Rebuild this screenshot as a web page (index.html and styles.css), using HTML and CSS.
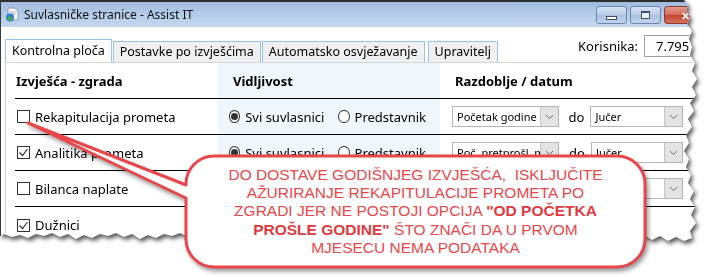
FILE: index.html
```html
<!DOCTYPE html>
<html lang="hr">
<head>
    <meta charset="UTF-8">
    <title>Suvlasničke stranice - Assist IT</title>
    <link rel="stylesheet" href="styles.css">
</head>
<body>
    <!-- Window screenshot with torn right/bottom edge -->
    <div class="frame">
        <div class="window">
            <div class="title-bar">
                <svg class="app-icon" width="15" height="15" viewBox="0 0 15 15">
                    <path d="M3 1h7l3 3v9H3z" fill="#f4f6f9" stroke="#8e9aab"/>
                    <path d="M4.5 5h6M4.5 7h6" stroke="#9fb3cc"/>
                    <circle cx="5" cy="10.5" r="4" fill="#2f7fd0"/>
                    <path d="M2.5 9.5c1-1 2-0.5 2.5 0.5s2 1 2.5 0v2c-1 1.5-3 2-4.5 1z" fill="#4cae3c"/>
                </svg>
                <span class="title">Suvlasničke stranice - Assist IT</span>
                <div class="win-buttons">
                    <span class="win-btn"><i class="glyph-min"></i></span>
                    <span class="win-btn"><i class="glyph-max"></i></span>
                    <span class="win-btn close">✕</span>
                </div>
            </div>

            <div class="client">
                <div class="tab-strip">
                    <ul class="tabs">
                        <li class="tab active">Kontrolna ploča</li>
                        <li class="tab">Postavke po izvješćima</li>
                        <li class="tab">Automatsko osvježavanje</li>
                        <li class="tab last">Upravitelj</li>
                    </ul>
                    <div class="users">
                        <span class="users-label">Korisnika:</span>
                        <span class="textbox">7.795</span>
                    </div>
                </div>

                <div class="tab-panel">
                    <div class="grid">
                        <div class="row head">
                            <div class="cell c1">Izvješća - zgrada</div>
                            <div class="cell c2">Vidljivost</div>
                            <div class="cell c3">Razdoblje / datum</div>
                        </div>

                        <div class="row">
                            <div class="cell c1"><span class="check"></span>Rekapitulacija prometa</div>
                            <div class="cell c2">
                                <span class="radio on"></span><span class="opt">Svi suvlasnici</span>
                                <span class="radio"></span><span class="opt">Predstavnik</span>
                            </div>
                            <div class="cell c3">
                                <div class="combo from"><span class="value">Početak godine</span><span class="arrow"><svg width="9" height="6" viewBox="0 0 9 6"><path d="M1 1l3.5 3.5L8 1" fill="none" stroke="#6d6d6d"/></svg></span></div>
                                <span class="to">do</span>
                                <div class="combo until"><span class="value">Jučer</span><span class="arrow"><svg width="9" height="6" viewBox="0 0 9 6"><path d="M1 1l3.5 3.5L8 1" fill="none" stroke="#6d6d6d"/></svg></span></div>
                            </div>
                        </div>

                        <div class="row">
                            <div class="cell c1"><span class="check on"><svg width="11" height="11" viewBox="0 0 11 11"><path d="M1.5 5.5l3 3 5-6.5" fill="none" stroke="#333" stroke-width="1.2"/></svg></span>Analitika prometa</div>
                            <div class="cell c2">
                                <span class="radio on"></span><span class="opt">Svi suvlasnici</span>
                                <span class="radio"></span><span class="opt">Predstavnik</span>
                            </div>
                            <div class="cell c3">
                                <div class="combo from"><span class="value">Poč. pretprošl. mj</span><span class="arrow"><svg width="9" height="6" viewBox="0 0 9 6"><path d="M1 1l3.5 3.5L8 1" fill="none" stroke="#6d6d6d"/></svg></span></div>
                                <span class="to">do</span>
                                <div class="combo until"><span class="value">Jučer</span><span class="arrow"><svg width="9" height="6" viewBox="0 0 9 6"><path d="M1 1l3.5 3.5L8 1" fill="none" stroke="#6d6d6d"/></svg></span></div>
                            </div>
                        </div>

                        <div class="row">
                            <div class="cell c1"><span class="check"></span>Bilanca naplate</div>
                            <div class="cell c2">
                                <span class="radio on"></span><span class="opt">Svi suvlasnici</span>
                                <span class="radio"></span><span class="opt">Predstavnik</span>
                            </div>
                            <div class="cell c3">
                                <div class="combo from"><span class="value">Početak godine</span><span class="arrow"><svg width="9" height="6" viewBox="0 0 9 6"><path d="M1 1l3.5 3.5L8 1" fill="none" stroke="#6d6d6d"/></svg></span></div>
                                <span class="to">do</span>
                                <div class="combo until"><span class="value">Jučer</span><span class="arrow"><svg width="9" height="6" viewBox="0 0 9 6"><path d="M1 1l3.5 3.5L8 1" fill="none" stroke="#6d6d6d"/></svg></span></div>
                            </div>
                        </div>

                        <div class="row last">
                            <div class="cell c1"><span class="check on"><svg width="11" height="11" viewBox="0 0 11 11"><path d="M1.5 5.5l3 3 5-6.5" fill="none" stroke="#333" stroke-width="1.2"/></svg></span>Dužnici</div>
                            <div class="cell c2"></div>
                            <div class="cell c3"></div>
                        </div>
                    </div>
                </div>
            </div>
        </div>
    </div>

    <!-- Red speech bubble laid over the window -->
    <svg class="callout" width="721" height="277" viewBox="0 0 721 277">
        <path d="M214 156H617A28 28 0 0 1 645 184V239A28 28 0 0 1 617 267H214A28 28 0 0 1 186 239V198L28 123L186 185V184A28 28 0 0 1 214 156Z"
              fill="#ffffff" stroke="#e8474a" stroke-width="3" stroke-linejoin="round"/>
    </svg>
    <div class="callout-body">
        <p class="callout-text">
            DO DOSTAVE GODIŠNJEG IZVJEŠĆA,&nbsp; ISKLJUČITE<br>
            AŽURIRANJE REKAPITULACIJE PROMETA PO<br>
            ZGRADI JER NE POSTOJI OPCIJA <b>"OD POČETKA</b><br>
            <b>PROŠLE GODINE"</b> ŠTO ZNAČI DA U PRVOM<br>
            MJESECU NEMA PODATAKA
        </p>
    </div>
</body>
</html>
```

FILE: styles.css
```css
body {
    margin: 0;
    width: 721px;
    height: 277px;
    position: relative;
    overflow: hidden;
    background-color: #ffffff;
    font-family: "Noto Sans", "Segoe UI", Arial, sans-serif;
    font-size: 13px;
    color: #000000;
}

/* Shadow follows the torn outline of the window */
.frame {
    filter: drop-shadow(2px 3px 2px rgba(0, 0, 0, 0.65));
}

.window {
    width: 700px;
    height: 250px;
    box-sizing: border-box;
    background-color: #ffffff;
    border-top: 2px solid #2e2e2e;
    border-left: 1px solid #3a3a3a;
    clip-path: polygon(0 0, 684px 0, 688px 5px, 686px 11px, 690px 17px, 687px 24px, 692px 31px, 689px 39px, 692px 47px, 690px 55px, 695px 63px, 692px 71px, 697px 79px, 692px 87px, 696px 95px, 690px 103px, 694px 111px, 688px 119px, 692px 127px, 686px 135px, 689px 143px, 684px 151px, 689px 159px, 686px 167px, 691px 175px, 688px 183px, 694px 191px, 690px 199px, 695px 207px, 691px 215px, 696px 223px, 690px 231px, 692px 238px, 684px 241px, 676px 237px, 668px 241px, 660px 236px, 652px 240px, 644px 235px, 636px 239px, 628px 236px, 620px 240px, 612px 235px, 604px 238px, 596px 234px, 588px 239px, 580px 236px, 572px 240px, 564px 235px, 556px 238px, 548px 234px, 540px 238px, 532px 235px, 524px 239px, 516px 234px, 508px 237px, 500px 233px, 492px 237px, 484px 234px, 476px 238px, 468px 235px, 460px 239px, 452px 234px, 444px 237px, 436px 233px, 428px 237px, 420px 234px, 412px 238px, 404px 235px, 396px 239px, 388px 234px, 380px 237px, 372px 233px, 364px 236px, 356px 234px, 348px 238px, 340px 235px, 332px 239px, 324px 234px, 316px 237px, 308px 233px, 300px 236px, 292px 234px, 284px 238px, 276px 235px, 268px 239px, 260px 234px, 252px 237px, 244px 233px, 236px 236px, 228px 234px, 220px 238px, 212px 235px, 204px 239px, 196px 234px, 188px 237px, 180px 233px, 172px 236px, 164px 234px, 156px 238px, 148px 235px, 140px 239px, 132px 234px, 124px 237px, 116px 233px, 108px 236px, 100px 234px, 92px 238px, 84px 235px, 76px 239px, 68px 234px, 60px 237px, 52px 233px, 44px 236px, 36px 234px, 28px 238px, 20px 235px, 12px 237px, 4px 234px, 0 236px);
}

/* Title bar */
.title-bar {
    height: 25px;
    display: flex;
    align-items: center;
    padding-left: 4px;
    background: linear-gradient(#9fbbdf, #b6cde9 55%, #c3d7ee);
}

.app-icon {
    margin-right: 4px;
}

.title {
    font-size: 12px;
    color: #111111;
}

.win-buttons {
    margin-left: auto;
    display: flex;
    gap: 3px;
    align-self: flex-start;
    margin-top: 4px;
    margin-right: -6px;
}

.win-btn {
    width: 29px;
    height: 16px;
    border: 1px solid #6b86ad;
    border-radius: 3px;
    background: linear-gradient(#d5e2f2, #b9cce6 50%, #a9bfdf 51%, #c3d5ec);
    display: flex;
    align-items: center;
    justify-content: center;
}

.win-btn.close {
    width: 40px;
    border-color: #8c3b32;
    background: linear-gradient(#e49a8c, #d46b5a 50%, #c2432f 51%, #d7735e);
    color: #ffffff;
    font-size: 11px;
    font-weight: bold;
}

.glyph-min {
    width: 9px;
    height: 2px;
    margin-top: 6px;
    background-color: #ffffff;
    border: 1px solid #3c4e6b;
}

.glyph-max {
    width: 7px;
    height: 5px;
    border: 1px solid #3c4e6b;
    border-top-width: 2px;
    background-color: #eef3fa;
}

/* Tabs and user count */
.tab-strip {
    height: 35px;
    box-sizing: border-box;
    padding: 8px 0 0 4px;
    display: flex;
}

.tabs {
    list-style-type: none;
    margin: 0;
    padding: 0;
    display: flex;
    align-items: flex-end;
    align-self: flex-end;
}

.tab {
    height: 21px;
    box-sizing: border-box;
    padding: 0 6px;
    margin-right: 1px;
    border: 1px solid #97c4ee;
    border-bottom: none;
    background-color: #f0f0f0;
    font-size: 12.5px;
    line-height: 20px;
    white-space: nowrap;
}

.tab.active {
    height: 23px;
    background-color: #ffffff;
    line-height: 22px;
}

.tab.last {
    margin-left: 2px;
}

.users {
    margin-left: auto;
    display: flex;
    align-items: center;
    align-self: flex-start;
}

.users-label {
    margin-right: 6px;
    font-size: 13px;
}

.textbox {
    width: 56px;
    height: 22px;
    box-sizing: border-box;
    padding-left: 11px;
    border: 1px solid #a0a0a0;
    border-right: none;
    font-size: 13px;
    line-height: 20px;
    white-space: nowrap;
    overflow: hidden;
}

/* Grid of reports */
.tab-panel {
    margin-left: 4px;
    height: 200px;
    border-left: 1px solid #d5d5d5;
    border-top: 1px solid #d5d5d5;
    padding-left: 9px;
}

.row {
    display: grid;
    grid-template-columns: 203px 222px 243px;
    height: 36px;
    box-sizing: border-box;
    border-bottom: 1px solid #000000;
}

.row.last {
    border-bottom: none;
}

.cell {
    display: flex;
    align-items: center;
    white-space: nowrap;
}

.c1 {
    padding-left: 2px;
}

.c2 {
    background-color: #eff6fc;
    padding-left: 11px;
}

.c3 {
    padding-left: 12px;
}

.head .cell {
    font-weight: bold;
    font-size: 13px;
}

.head .c1 {
    padding-left: 1px;
}

.head .c2,
.head .c3 {
    padding-left: 15px;
}

.check {
    width: 13px;
    height: 13px;
    box-sizing: border-box;
    border: 1px solid #333333;
    background-color: #ffffff;
    margin-right: 5px;
    display: flex;
    align-items: center;
    justify-content: center;
}

.radio {
    width: 13px;
    height: 13px;
    box-sizing: border-box;
    border: 1px solid #333333;
    border-radius: 50%;
    background-color: #ffffff;
    margin-right: 5px;
    display: flex;
    align-items: center;
    justify-content: center;
}

.radio.on::after {
    content: "";
    width: 7px;
    height: 7px;
    border-radius: 50%;
    background-color: #333333;
}

.opt {
    margin-right: 14px;
}

.combo {
    display: flex;
    height: 21px;
    box-sizing: border-box;
    border: 1px solid #b5b5b5;
    background-color: #ffffff;
    font-size: 11px;
}

.combo.from {
    width: 107px;
}

.combo.until {
    width: 93px;
}

.combo .value {
    flex: 1;
    padding-left: 4px;
    line-height: 19px;
    white-space: nowrap;
    overflow: hidden;
}

.combo .arrow {
    width: 17px;
    background-color: #e3e3e3;
    border-left: 1px solid #c4c4c4;
    display: flex;
    align-items: center;
    justify-content: center;
}

.to {
    margin: 0 6px 0 10px;
}

/* Speech bubble */
.callout {
    position: absolute;
    left: 0;
    top: 0;
    filter: drop-shadow(2px 3px 2px rgba(0, 0, 0, 0.4));
}

.callout-body {
    position: absolute;
    left: 186px;
    top: 156px;
    width: 459px;
    height: 111px;
    display: flex;
    align-items: center;
    justify-content: center;
}

.callout-text {
    margin: 0;
    text-align: center;
    font-family: "Liberation Sans", Arial, sans-serif;
    font-size: 15.5px;
    line-height: 18.3px;
    color: #e8474a;
}

.callout-text b {
    color: #df3a3d;
}
```
